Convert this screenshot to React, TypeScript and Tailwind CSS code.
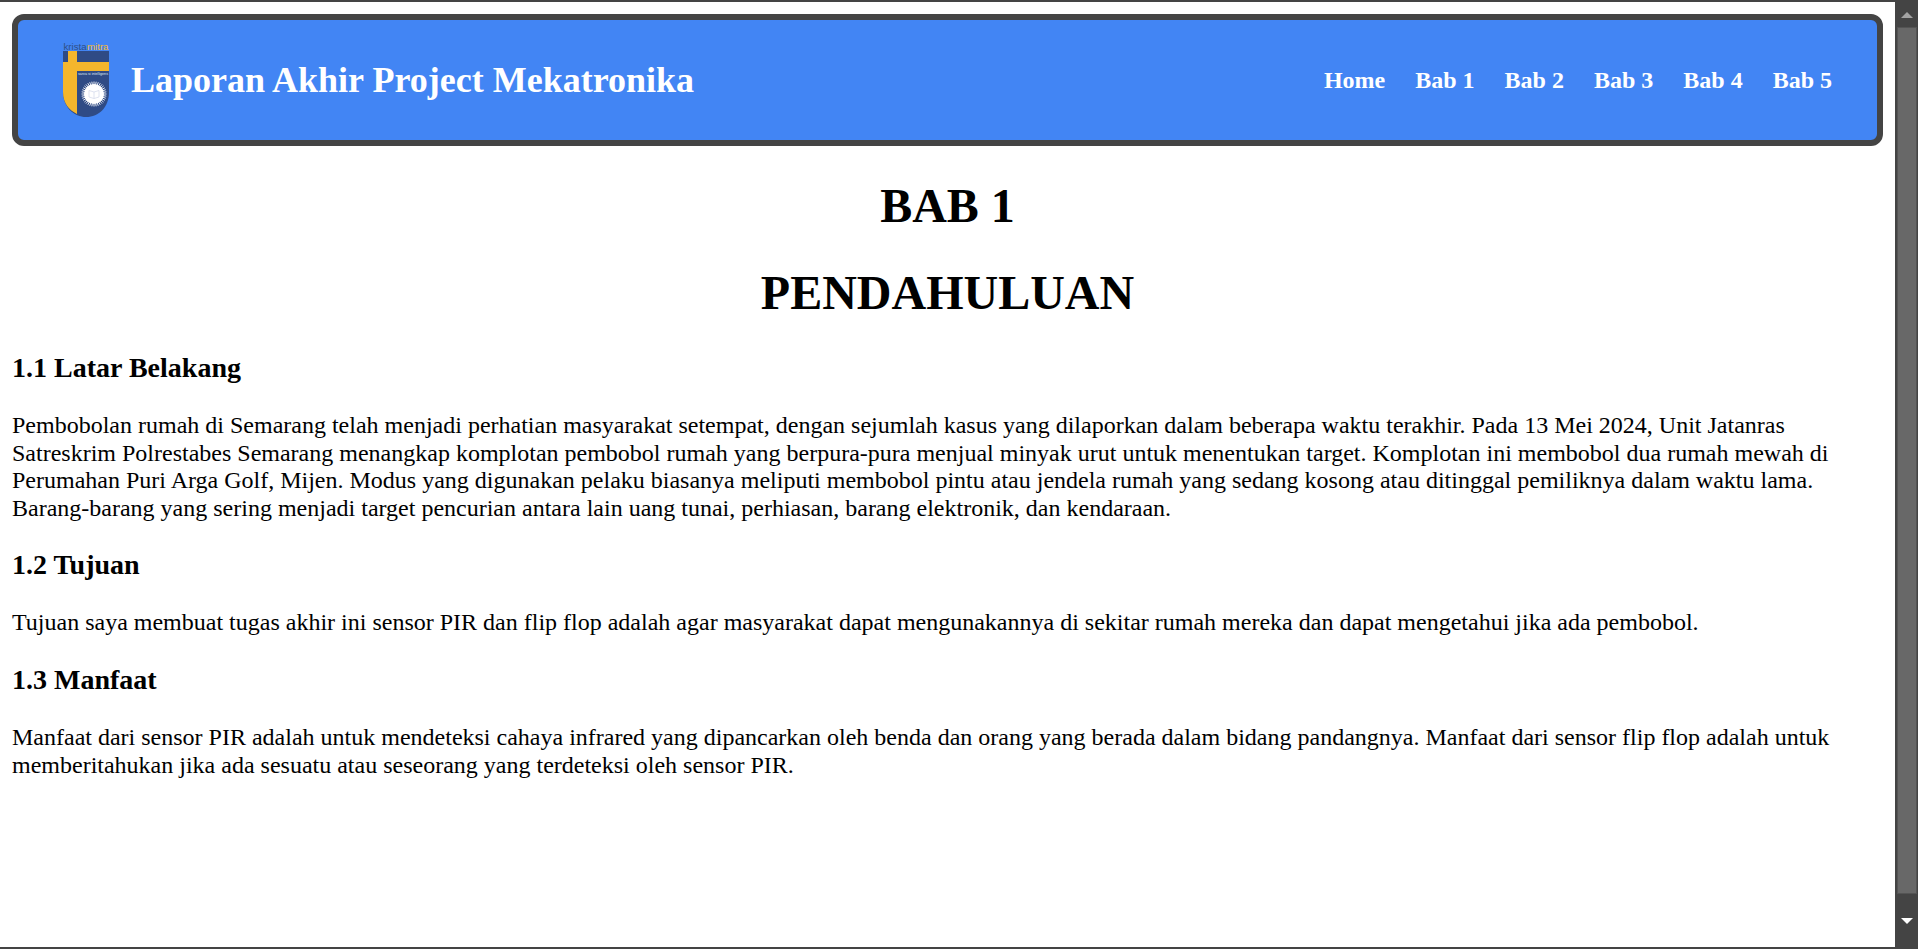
const navItems = ["Home", "Bab 1", "Bab 2", "Bab 3", "Bab 4", "Bab 5"];

// rays around the seal
const rays = Array.from({ length: 36 }, (_, i) => (i * Math.PI) / 18);

function Logo() {
  return (
    <svg width="46" height="75" viewBox="0 0 46 75" className="shrink-0">
      <text x="0.5" y="7" fontFamily="Liberation Sans, sans-serif" fontSize="9" textLength="23" lengthAdjust="spacingAndGlyphs" fill="#2f4f86">
        krista
      </text>
      <text x="24" y="7" fontFamily="Liberation Sans, sans-serif" fontSize="9" textLength="21.5" lengthAdjust="spacingAndGlyphs" fill="#f4b82e">
        mitra
      </text>
      <path d="M0 8H46V49C46 64 36 74 23 74C11 74 0 64 0 49Z" fill="#2f4b85" />
      <path d="M5 8H14V19H46V28H14V71C6 67 0 60 0 49V19H5Z" fill="#f4b62c" />
      <text x="15" y="31.5" fontFamily="Liberation Sans, sans-serif" fontSize="3.2" textLength="30" lengthAdjust="spacingAndGlyphs" fill="#dfe6f2">
        sarva si intelligens
      </text>
      {rays.map((a) => (
        <line
          key={a}
          x1={31 + Math.cos(a) * 9}
          y1={51 + Math.sin(a) * 9}
          x2={31 + Math.cos(a) * 12.5}
          y2={51 + Math.sin(a) * 12.5}
          stroke="#ffffff"
          strokeWidth="0.9"
        />
      ))}
      <circle cx="31" cy="51" r="10" fill="#ffffff" />
      <path d="M26 47.5L31 49L36 47.5V54L31 55.5L26 54ZM31 49V55.5" fill="none" stroke="#d5dcec" strokeWidth="0.8" />
    </svg>
  );
}

function Header() {
  return (
    <header className="flex h-[132px] items-center justify-between rounded-xl border-[6px] border-[#444444] bg-[#4285f4] pl-[45px] pr-[45px] text-white">
      <div className="flex items-center gap-[22px]">
        <Logo />
        <h1 className="text-4xl font-bold leading-[41px]">Laporan Akhir Project Mekatronika</h1>
      </div>
      <nav className="flex gap-[30px] text-2xl font-bold leading-[28px]">
        {navItems.map((item) => (
          <a key={item}>{item}</a>
        ))}
      </nav>
    </header>
  );
}

function Scrollbar() {
  return (
    <div className="flex w-[23px] shrink-0 flex-col items-center bg-[#444444] pl-px">
      <div className="flex h-[25px] items-center justify-center">
        <div className="h-0 w-0 border-x-[6px] border-b-[6px] border-x-transparent border-b-[#a3a3a3]" />
      </div>
      <div className="h-[867px] w-5 border border-[#545454] bg-[#686868]" />
      <div className="flex flex-1 items-center justify-center">
        <div className="h-0 w-0 border-x-[6px] border-t-[6px] border-x-transparent border-t-white" />
      </div>
    </div>
  );
}

export default function App() {
  return (
    <div className="flex h-screen flex-col overflow-hidden bg-white font-['Liberation_Serif',serif] text-black">
      <div className="h-[2px] bg-[#444444]" />
      <div className="flex min-h-0 flex-1">
        <main className="min-w-0 flex-1 px-3 pt-3">
          <Header />
          <h2 className="mt-[32px] text-center text-5xl font-bold leading-[55px]">BAB 1</h2>
          <h2 className="mt-[32px] text-center text-5xl font-bold leading-[55px]">PENDAHULUAN</h2>
          <h3 className="mt-[32px] text-[28px] font-bold leading-[32px]">1.1 Latar Belakang</h3>
          <p className="mt-[28px] text-2xl leading-[27.6px]">
            Pembobolan rumah di Semarang telah menjadi perhatian masyarakat setempat, dengan sejumlah kasus yang dilaporkan dalam beberapa waktu terakhir. Pada 13 Mei 2024, Unit Jatanras Satreskrim Polrestabes Semarang menangkap komplotan pembobol rumah yang berpura-pura menjual minyak urut untuk menentukan target. Komplotan ini membobol dua rumah mewah di Perumahan Puri Arga Golf, Mijen. Modus yang digunakan pelaku biasanya meliputi membobol pintu atau jendela rumah yang sedang kosong atau ditinggal pemiliknya dalam waktu lama. Barang-barang yang sering menjadi target pencurian antara lain uang tunai, perhiasan, barang elektronik, dan kendaraan.
          </p>
          <h3 className="mt-[27px] text-[28px] font-bold leading-[32px]">1.2 Tujuan</h3>
          <p className="mt-[28px] text-2xl leading-[27.6px]">
            Tujuan saya membuat tugas akhir ini sensor PIR dan flip flop adalah agar masyarakat dapat mengunakannya di sekitar rumah mereka dan dapat mengetahui jika ada pembobol.
          </p>
          <h3 className="mt-[27px] text-[28px] font-bold leading-[32px]">1.3 Manfaat</h3>
          <p className="mt-[28px] text-2xl leading-[27.6px]">
            Manfaat dari sensor PIR adalah untuk mendeteksi cahaya infrared yang dipancarkan oleh benda dan orang yang berada dalam bidang pandangnya. Manfaat dari sensor flip flop adalah untuk memberitahukan jika ada sesuatu atau seseorang yang terdeteksi oleh sensor PIR.
          </p>
        </main>
        <Scrollbar />
      </div>
      <div className="h-[2px] bg-[#444444]" />
    </div>
  );
}
